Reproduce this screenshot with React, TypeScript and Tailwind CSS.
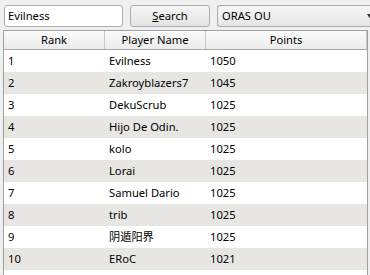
import React from 'react';

const rows: [number, string, number][] = [
  [1, 'Evilness', 1050],
  [2, 'Zakroyblazers7', 1045],
  [3, 'DekuScrub', 1025],
  [4, 'Hijo De Odin.', 1025],
  [5, 'kolo', 1025],
  [6, 'Lorai', 1025],
  [7, 'Samuel Dario', 1025],
  [8, 'trib', 1025],
  [9, '阴遁阳界', 1025],
  [10, 'ERoC', 1021],
];

const font = { fontFamily: '"Noto Sans", "Noto Sans CJK SC", sans-serif' };

export default function App() {
  return (
    <div className="w-[370px] h-[275px] bg-[#f0f0f0] overflow-hidden text-[11.2px] text-black" style={font}>
      <div className="flex items-center h-[30px] pl-[4px] pt-[1px]">
        <div className="w-[119px] h-[22px] bg-white border border-[#acacac] rounded-[3px] flex items-center px-[3px] leading-none">
          Evilness
        </div>
        <button className="ml-[7px] w-[80px] h-[22px] border border-[#adadad] rounded-[3px] bg-gradient-to-b from-[#f6f6f6] to-[#e3e3e3] flex items-center justify-center leading-none">
          <span><span className="underline">S</span>earch</span>
        </button>
        <div className="ml-[7px] flex-1 h-[22px] border border-[#acacac] rounded-l-[3px] border-r-0 bg-gradient-to-b from-[#f6f6f6] to-[#e6e6e6] flex items-center justify-between pl-[4px] leading-none">
          <span>ORAS OU</span>
          <svg width="5" height="4" viewBox="0 0 5 4" className="mr-[-2px]"><path d="M0 0h5L2.5 4z" fill="#333" /></svg>
        </div>
      </div>
      <div className="ml-[3px] w-[365px] h-[245px] border-l border-r border-t border-[#a0a0a0] bg-white">
        <div className="flex h-[19px] bg-gradient-to-b from-[#fbfbfb] to-[#ececec] border-b border-[#a8a8a8]">
          <div className="w-[101px] border-r border-[#c8c8c8] flex items-center justify-center">Rank</div>
          <div className="w-[101px] border-r border-[#c8c8c8] flex items-center justify-center">Player Name</div>
          <div className="w-[161px] border-r border-[#c8c8c8] flex items-center justify-center">Points</div>
        </div>
        {rows.map(([rank, name, pts], i) => (
          <div key={rank} className={`flex h-[22px] items-center ${i % 2 ? 'bg-[#e8e6e2]' : 'bg-white'}`}>
            <div className="w-[101px] pl-[4px]">{rank}</div>
            <div className="w-[101px] pl-[4px] whitespace-nowrap">{name}</div>
            <div className="pl-[4px]">{pts}</div>
          </div>
        ))}
      </div>
    </div>
  );
}
